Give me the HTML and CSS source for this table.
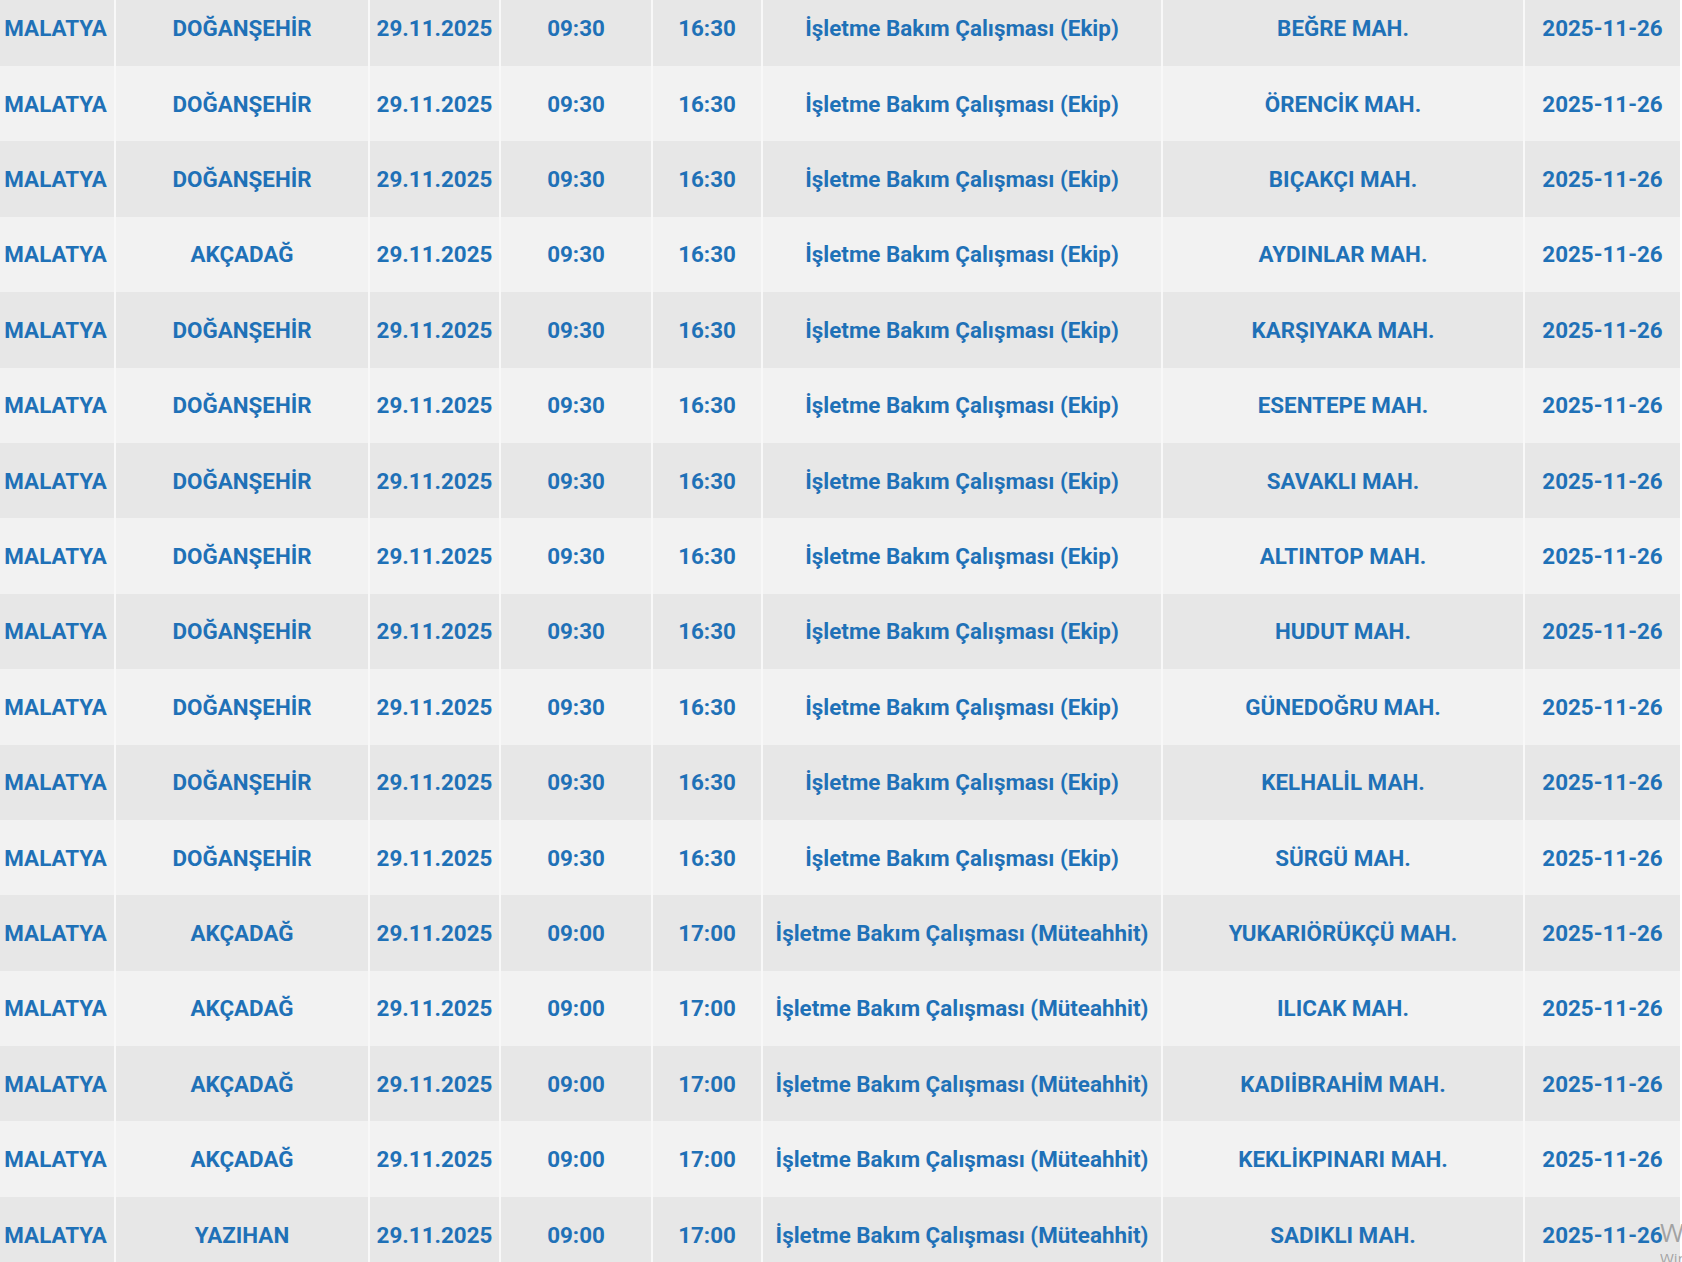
FILE: index.html
```html
<!DOCTYPE html>
<html lang="tr">
<head>
<meta charset="utf-8">
<title>Planlı Kesintiler</title>
<link rel="stylesheet" href="styles.css">
</head>
<body>
<table class="outages">
  <colgroup>
    <col class="c-il"><col class="c-ilce"><col class="c-tarih"><col class="c-bas"><col class="c-bit"><col class="c-neden"><col class="c-mah"><col class="c-kayit">
  </colgroup>
  <tbody>
    <tr><td>MALATYA</td><td>DOĞANŞEHİR</td><td>29.11.2025</td><td>09:30</td><td>16:30</td><td>İşletme Bakım Çalışması (Ekip)</td><td>BEĞRE MAH.</td><td>2025-11-26</td></tr>
    <tr><td>MALATYA</td><td>DOĞANŞEHİR</td><td>29.11.2025</td><td>09:30</td><td>16:30</td><td>İşletme Bakım Çalışması (Ekip)</td><td>ÖRENCİK MAH.</td><td>2025-11-26</td></tr>
    <tr><td>MALATYA</td><td>DOĞANŞEHİR</td><td>29.11.2025</td><td>09:30</td><td>16:30</td><td>İşletme Bakım Çalışması (Ekip)</td><td>BIÇAKÇI MAH.</td><td>2025-11-26</td></tr>
    <tr><td>MALATYA</td><td>AKÇADAĞ</td><td>29.11.2025</td><td>09:30</td><td>16:30</td><td>İşletme Bakım Çalışması (Ekip)</td><td>AYDINLAR MAH.</td><td>2025-11-26</td></tr>
    <tr><td>MALATYA</td><td>DOĞANŞEHİR</td><td>29.11.2025</td><td>09:30</td><td>16:30</td><td>İşletme Bakım Çalışması (Ekip)</td><td>KARŞIYAKA MAH.</td><td>2025-11-26</td></tr>
    <tr><td>MALATYA</td><td>DOĞANŞEHİR</td><td>29.11.2025</td><td>09:30</td><td>16:30</td><td>İşletme Bakım Çalışması (Ekip)</td><td>ESENTEPE MAH.</td><td>2025-11-26</td></tr>
    <tr><td>MALATYA</td><td>DOĞANŞEHİR</td><td>29.11.2025</td><td>09:30</td><td>16:30</td><td>İşletme Bakım Çalışması (Ekip)</td><td>SAVAKLI MAH.</td><td>2025-11-26</td></tr>
    <tr><td>MALATYA</td><td>DOĞANŞEHİR</td><td>29.11.2025</td><td>09:30</td><td>16:30</td><td>İşletme Bakım Çalışması (Ekip)</td><td>ALTINTOP MAH.</td><td>2025-11-26</td></tr>
    <tr><td>MALATYA</td><td>DOĞANŞEHİR</td><td>29.11.2025</td><td>09:30</td><td>16:30</td><td>İşletme Bakım Çalışması (Ekip)</td><td>HUDUT MAH.</td><td>2025-11-26</td></tr>
    <tr><td>MALATYA</td><td>DOĞANŞEHİR</td><td>29.11.2025</td><td>09:30</td><td>16:30</td><td>İşletme Bakım Çalışması (Ekip)</td><td>GÜNEDOĞRU MAH.</td><td>2025-11-26</td></tr>
    <tr><td>MALATYA</td><td>DOĞANŞEHİR</td><td>29.11.2025</td><td>09:30</td><td>16:30</td><td>İşletme Bakım Çalışması (Ekip)</td><td>KELHALİL MAH.</td><td>2025-11-26</td></tr>
    <tr><td>MALATYA</td><td>DOĞANŞEHİR</td><td>29.11.2025</td><td>09:30</td><td>16:30</td><td>İşletme Bakım Çalışması (Ekip)</td><td>SÜRGÜ MAH.</td><td>2025-11-26</td></tr>
    <tr><td>MALATYA</td><td>AKÇADAĞ</td><td>29.11.2025</td><td>09:00</td><td>17:00</td><td>İşletme Bakım Çalışması (Müteahhit)</td><td>YUKARIÖRÜKÇÜ MAH.</td><td>2025-11-26</td></tr>
    <tr><td>MALATYA</td><td>AKÇADAĞ</td><td>29.11.2025</td><td>09:00</td><td>17:00</td><td>İşletme Bakım Çalışması (Müteahhit)</td><td>ILICAK MAH.</td><td>2025-11-26</td></tr>
    <tr><td>MALATYA</td><td>AKÇADAĞ</td><td>29.11.2025</td><td>09:00</td><td>17:00</td><td>İşletme Bakım Çalışması (Müteahhit)</td><td>KADIİBRAHİM MAH.</td><td>2025-11-26</td></tr>
    <tr><td>MALATYA</td><td>AKÇADAĞ</td><td>29.11.2025</td><td>09:00</td><td>17:00</td><td>İşletme Bakım Çalışması (Müteahhit)</td><td>KEKLİKPINARI MAH.</td><td>2025-11-26</td></tr>
    <tr><td>MALATYA</td><td>YAZIHAN</td><td>29.11.2025</td><td>09:00</td><td>17:00</td><td>İşletme Bakım Çalışması (Müteahhit)</td><td>SADIKLI MAH.</td><td>2025-11-26</td></tr>
  </tbody>
</table>
<div class="watermark">
  <div class="wm-title">Windows'u Etkinleştir</div>
  <div class="wm-sub">Windows'u etkinleştirmek için Ayarlar'a gidin.</div>
</div>
</body>
</html>
```
FILE: styles.css
```css
html, body {
  margin: 0;
  padding: 0;
  background: #ffffff;
  overflow: hidden;
}

body {
  width: 1682px;
  height: 1262px;
  position: relative;
  font-family: Roboto, "Liberation Sans", sans-serif;
}

.outages {
  table-layout: fixed;
  border-collapse: collapse;
  width: 1683px;
  margin-left: -3px;
  margin-top: -9.4px;
}

.c-il { width: 118px; }
.c-ilce { width: 254px; }
.c-tarih { width: 131px; }
.c-bas { width: 152px; }
.c-bit { width: 110px; }
.c-neden { width: 400px; }
.c-mah { width: 362px; }
.c-kayit { width: 156px; }

.outages tr {
  height: 75.4px;
  background: #e7e7e7;
}

.outages tr:nth-child(even) {
  background: #f2f2f2;
}

.outages td {
  padding: 0;
  text-align: center;
  vertical-align: middle;
  white-space: nowrap;
  color: #1f71b7;
  font-weight: 700;
  font-size: 22.4px;
  border-left: 2px solid #f8f8f8;
}

.outages td:first-child {
  border-left: none;
}

.watermark {
  position: absolute;
  left: 1660px;
  top: 1216px;
  width: 22px;
  overflow: hidden;
  color: rgba(140, 140, 140, 0.75);
  font-family: "Open Sans", "Noto Sans", sans-serif;
  white-space: nowrap;
}

.wm-title {
  font-size: 26px;
  line-height: 32px;
}

.wm-sub {
  font-size: 15px;
  line-height: 20px;
}
```
